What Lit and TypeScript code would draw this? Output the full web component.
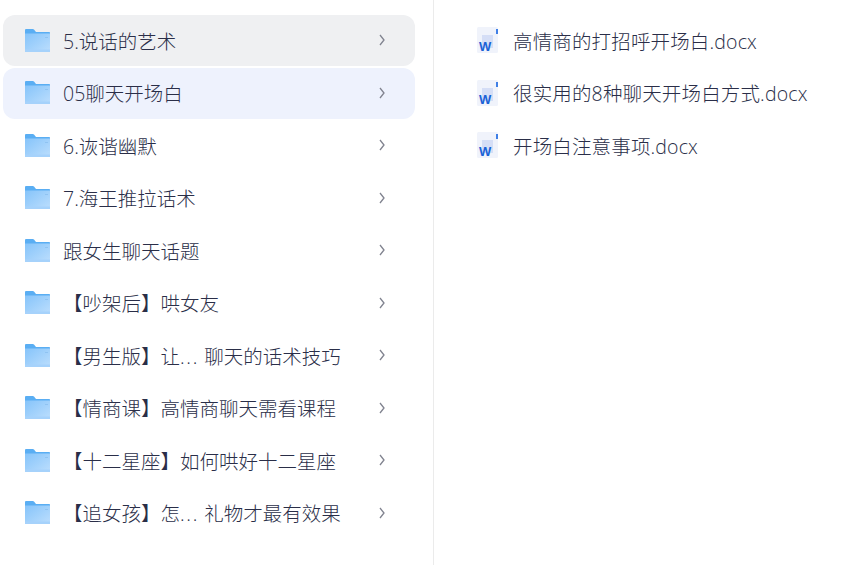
import { LitElement, html, css } from "lit";
import { customElement } from "lit/decorators.js";

const folders = [
  "5.说话的艺术",
  "05聊天开场白",
  "6.诙谐幽默",
  "7.海王推拉话术",
  "跟女生聊天话题",
  "【吵架后】哄女友",
  "【男生版】让... 聊天的话术技巧",
  "【情商课】高情商聊天需看课程",
  "【十二星座】如何哄好十二星座",
  "【追女孩】怎... 礼物才最有效果",
];

const files = ["高情商的打招呼开场白.docx", "很实用的8种聊天开场白方式.docx", "开场白注意事项.docx"];

const folderIcon = html`<svg class="folder" width="25" height="23" viewBox="0 0 25 23">
  <defs>
    <linearGradient id="fg" x1="0" y1="0" x2="1" y2="1">
      <stop offset="0" stop-color="#86c4fa" />
      <stop offset="1" stop-color="#bcdefd" />
    </linearGradient>
  </defs>
  <path d="M0 1.2C0 .5.5 0 1.2 0h6.6c.5 0 .9.2 1.2.6L11 3h13c.6 0 1 .4 1 1v4H0z" fill="#5aaef3" />
  <rect x="0" y="4.5" width="25" height="18.5" fill="url(#fg)" />
  <rect x="0" y="20.5" width="25" height="2.5" fill="#a6d2fb" />
  <rect x="20" y="8" width="3" height="1" fill="#8fc3f2" />
</svg>`;

const wordIcon = html`<svg class="word" width="22" height="26" viewBox="0 0 22 26">
  <rect x="0" y="0" width="21" height="26" rx="1.5" fill="#f0f3fb" />
  <rect x="5" y="8" width="11" height="13" fill="#d5def6" />
  <rect x="19" y="2" width="2" height="5" fill="#3f7fe6" />
  <text x="2" y="23.5" class="w">W</text>
</svg>`;

@customElement("app-root")
export class AppRoot extends LitElement {
  static styles = css`
    :host {
      display: flex;
      width: 855px;
      height: 565px;
      background: #fff;
      overflow: hidden;
      font-family: "Open Sans", "Noto Sans CJK SC", sans-serif;
      font-size: 19.5px;
      font-weight: 300;
      color: #2a2e48;
    }
    .left {
      width: 434px;
      box-sizing: border-box;
      padding: 15px 18px 0 3px;
      border-right: 1px solid #ebebeb;
      display: flex;
      flex-direction: column;
      gap: 1.5px;
    }
    .row {
      flex: 0 0 51px;
      box-sizing: border-box;
      display: flex;
      align-items: center;
      padding: 0 30px 0.6px 22px;
      border-radius: 12px;
    }
    .row.hover {
      background: #eff0f2;
    }
    .row.active {
      background: #eef2fd;
    }
    .folder {
      flex: none;
      margin-right: 13px;
    }
    .name {
      flex: 1;
      white-space: nowrap;
    }
    .dots {
      letter-spacing: 1.7px;
    }
    .right {
      flex: 1;
      padding: 15px 0 0 43px;
      display: flex;
      flex-direction: column;
      gap: 1.5px;
    }
    .file {
      flex: 0 0 51px;
      box-sizing: border-box;
      display: flex;
      align-items: center;
      padding-bottom: 0.6px;
      white-space: nowrap;
      letter-spacing: 0.15px;
    }
    .word {
      flex: none;
      margin-right: 14px;
    }
    .w {
      font-family: "Liberation Sans", sans-serif;
      font-size: 13px;
      font-weight: 700;
      fill: #1a62d6;
    }
    .chev {
      flex: none;
    }
  `;

  // the elided names carry wider dots than the font's own
  private renderName(name: string) {
    const [head, tail] = name.split("...");
    if (tail === undefined) return name;
    return html`${head}<span class="dots">...</span>${tail}`;
  }

  render() {
    return html`
      <div class="left">
        ${folders.map(
          (name, i) => html`<div class="row ${i === 0 ? "hover" : i === 1 ? "active" : ""}">
            ${folderIcon}
            <span class="name">${this.renderName(name)}</span>
            <svg class="chev" width="6" height="12" viewBox="0 0 6 12">
              <path d="M1 1l4 5-4 5" fill="none" stroke="#80838f" stroke-width="1.3" />
            </svg>
          </div>`,
        )}
      </div>
      <div class="right">
        ${files.map((name) => html`<div class="file">${wordIcon}<span>${name}</span></div>`)}
      </div>
    `;
  }
}
